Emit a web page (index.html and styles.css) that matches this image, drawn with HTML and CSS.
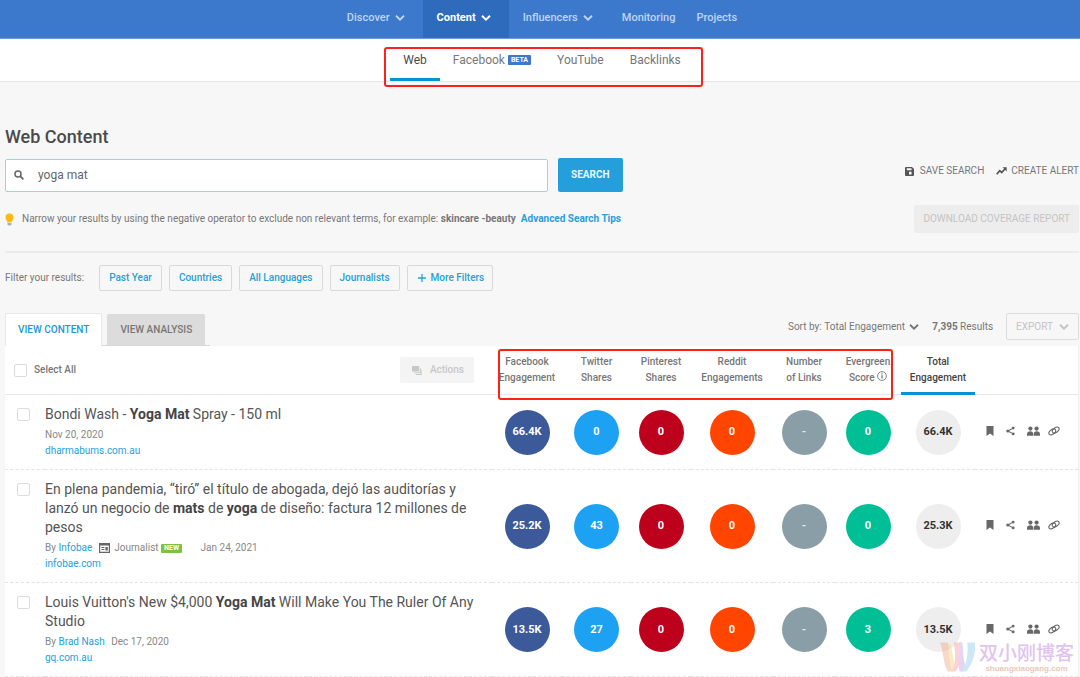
FILE: index.html
```html
<!DOCTYPE html>
<html lang="en">
<head>
<meta charset="utf-8">
<title>Web Content</title>
<link rel="stylesheet" href="styles.css">
</head>
<body>
<svg class="sprite" aria-hidden="true">
  <symbol id="chevron" viewBox="0 0 10 6"><path d="M1 .8 5 4.700 9 .8" fill="none" stroke="currentColor" stroke-width="1.900"/></symbol>
  <symbol id="bookmark" viewBox="0 0 8 10"><path d="M.5 0h7v10L4 7.4.5 10z" fill="currentColor"/></symbol>
  <symbol id="share" viewBox="0 0 10 10"><path d="M8 1.8 2 5l6 3.2" fill="none" stroke="currentColor" stroke-width="1.2"/><circle cx="8" cy="1.8" r="1.6" fill="currentColor"/><circle cx="2" cy="5" r="1.7" fill="currentColor"/><circle cx="8" cy="8.2" r="1.6" fill="currentColor"/></symbol>
  <symbol id="people" viewBox="0 0 14 10"><g fill="currentColor"><circle cx="3.7" cy="2.4" r="2.3"/><circle cx="10.3" cy="2.4" r="2.3"/><path d="M0 10V8.2C0 6.400 1.600 5.300 3.600 5.300s3.100 1.100 3.100 2.900V10zM7.300 10V8.200c0-1.800 1.100-2.900 3.100-2.900s3.600 1.100 3.600 2.900V10z"/></g></symbol>
  <symbol id="link" viewBox="0 0 12 10"><g fill="none" stroke="currentColor" stroke-width="1.1"><ellipse cx="4.300" cy="5.900" rx="3.800" ry="2.300" transform="rotate(-35 4.300 5.900)"/><ellipse cx="7.700" cy="4.100" rx="3.800" ry="2.300" transform="rotate(-35 7.700 4.100)"/></g></symbol>
</svg>

<header class="topbar">
  <nav class="topnav" aria-label="Main">
    <button class="topnav-item" type="button">Discover <svg class="chev"><use href="#chevron"/></svg></button>
    <button class="topnav-item is-active" type="button">Content <svg class="chev"><use href="#chevron"/></svg></button>
    <button class="topnav-item" type="button">Influencers <svg class="chev"><use href="#chevron"/></svg></button>
    <a class="topnav-item is-plain" href="#">Monitoring</a>
    <a class="topnav-item is-plain" href="#">Projects</a>
  </nav>
</header>

<div class="subbar">
  <nav class="subnav" aria-label="Content type">
    <a class="subnav-item is-active" href="#">Web</a>
    <a class="subnav-item" href="#">Facebook <span class="beta">BETA</span></a>
    <a class="subnav-item" href="#">YouTube</a>
    <a class="subnav-item" href="#">Backlinks</a>
    <span class="callout callout-nav"></span>
  </nav>
</div>

<main class="page">
  <h1 class="title">Web Content</h1>

  <div class="search-row">
    <form class="search">
      <label class="search-box">
        <svg class="icon-search" viewBox="0 0 10 10"><circle cx="4" cy="4" r="3" fill="none" stroke="currentColor" stroke-width="1.500"/><path d="m6.200 6.200 3.200 3.200" stroke="currentColor" stroke-width="1.800"/></svg>
        <input class="search-input" type="text" value="yoga mat" aria-label="Search">
      </label>
      <button class="btn-search" type="button">SEARCH</button>
    </form>
    <div class="search-links">
      <a class="text-action" href="#"><svg class="icon-save" viewBox="0 0 9 9"><path fill="currentColor" fill-rule="evenodd" d="M1 0h6l2 2v6a1 1 0 0 1-1 1H1a1 1 0 0 1-1-1V1a1 1 0 0 1 1-1zm.800 1.300v1.900h4.700V1.300zM4 4.800v2.600h2.600V4.800z"/></svg>SAVE SEARCH</a>
      <a class="text-action is-alert" href="#"><svg class="icon-trend" viewBox="0 0 11 8"><path d="m.700 7.200 3-3.600 2.100 1.900 3-3.500" fill="none" stroke="currentColor" stroke-width="1.700"/><path d="M6.600.3h4.100v4.100z" fill="currentColor"/></svg>CREATE ALERT</a>
    </div>
  </div>

  <div class="tip-row">
    <p class="tip"><svg class="icon-bulb" viewBox="0 0 9 13"><path d="M4.500.4a4 4 0 0 0-4 4c0 2 1.500 2.800 1.900 5h4.200c.4-2.200 1.900-3 1.900-5a4 4 0 0 0-4-4z" fill="#fdbb12"/><path d="M2.500 9.900h4v1.300l-1 1.200h-2l-1-1.200z" fill="#9fb3bf"/></svg>Narrow your results by using the negative operator to exclude non relevant terms, for example: <strong>skincare -beauty</strong> <a class="tip-link" href="#">Advanced Search Tips</a></p>
    <button class="btn-report" type="button" disabled>DOWNLOAD COVERAGE REPORT</button>
  </div>

  <div class="filters">
    <span class="filters-label">Filter your results:</span>
    <button class="filter" type="button">Past Year</button>
    <button class="filter" type="button">Countries</button>
    <button class="filter" type="button">All Languages</button>
    <button class="filter" type="button">Journalists</button>
    <button class="filter is-more" type="button"><svg class="icon-plus" viewBox="0 0 8 8"><path d="M4 0v8M0 4h8" stroke="currentColor" stroke-width="1.300"/></svg>More Filters</button>
  </div>

  <div class="tabs-row">
    <div class="tabs">
      <button class="tab is-active" type="button">VIEW CONTENT</button>
      <span class="tab-rest"><button class="tab" type="button">VIEW ANALYSIS</button></span>
    </div>
    <div class="tools">
      <label class="sort">Sort by: <select class="sort-select"><option>Total Engagement</option></select><svg class="chev"><use href="#chevron"/></svg></label>
      <span class="count"><strong>7,395</strong> Results</span>
      <button class="btn-export" type="button" disabled>EXPORT <svg class="chev"><use href="#chevron"/></svg></button>
    </div>
  </div>

  <div class="panel">
    <table class="results">
      <colgroup><col class="c-check"><col><col class="c-fb"><col class="c-tw"><col class="c-pin"><col class="c-red"><col class="c-num"><col class="c-ever"><col class="c-total"><col class="c-act"></colgroup>
      <thead>
        <tr>
          <th colspan="2" class="head-main"><div class="head-tools"><label class="select-all"><input class="check" type="checkbox">Select All</label><button class="btn-actions" type="button" disabled><svg class="icon-stack" viewBox="0 0 10 9"><path d="M0 0h7.300v5.600H0zM8 2.200h.9v5H2.300v-.9H8zM9.400 3.800h.6V9H4v-.9h5.400z" fill="currentColor"/></svg>Actions</button></div></th>
          <th>Facebook<br>Engagement</th>
          <th>Twitter<br>Shares</th>
          <th>Pinterest<br>Shares</th>
          <th>Reddit<br>Engagements</th>
          <th>Number<br>of Links</th>
          <th>Evergreen<br>Score <svg class="icon-info" viewBox="0 0 10 10"><circle cx="5" cy="5" r="4.400" fill="none" stroke="currentColor" stroke-width=".9"/><path d="M5 4.300v3.300M5 2.300v1.200" stroke="currentColor" stroke-width="1.300"/></svg></th>
          <th class="is-sorted">Total<br>Engagement</th>
          <th></th>
        </tr>
      </thead>
      <tbody>
        <tr>
          <td class="cell-check"><input class="check" type="checkbox" aria-label="Select Bondi Wash"></td>
          <td class="cell-main">
            <h2 class="headline">Bondi Wash - <strong>Yoga Mat</strong> Spray - 150 ml</h2>
            <p class="meta">Nov 20, 2020</p>
            <p class="meta"><a href="#">dharmabums.com.au</a></p>
          </td>
          <td><span class="dot fb">66.4K</span></td>
          <td><span class="dot tw">0</span></td>
          <td><span class="dot pin">0</span></td>
          <td><span class="dot red">0</span></td>
          <td><span class="dot num">-</span></td>
          <td><span class="dot ever">0</span></td>
          <td><span class="dot total">66.4K</span></td>
          <td><div class="acts"><button class="act is-wide" type="button" aria-label="Bookmark"><svg class="i-book"><use href="#bookmark"/></svg></button><button class="act is-wide" type="button" aria-label="Share"><svg class="i-share"><use href="#share"/></svg></button><button class="act" type="button" aria-label="Sharers"><svg class="i-people"><use href="#people"/></svg></button><button class="act" type="button" aria-label="Backlinks"><svg class="i-link"><use href="#link"/></svg></button></div></td>
        </tr>
        <tr>
          <td class="cell-check"><input class="check" type="checkbox" aria-label="Select En plena pandemia"></td>
          <td class="cell-main">
            <h2 class="headline">En plena pandemia, “tiró” el título de abogada, dejó las auditorías y lanzó un negocio de <strong>mats</strong> de <strong>yoga</strong> de diseño: factura 12 millones de pesos</h2>
            <p class="meta">By <a href="#">Infobae</a> <svg class="icon-card" viewBox="0 0 11 10"><path fill="currentColor" fill-rule="evenodd" d="M0 0h11v10H0zm1.200 2.600v6.200h8.600V2.600zM2.400 4h3v1h-3zm0 2h3v1h-3zM6.400 4h2.400v3.500H6.400z"/></svg> Journalist <span class="new">NEW</span> <span class="date-far">Jan 24, 2021</span></p>
            <p class="meta"><a href="#">infobae.com</a></p>
          </td>
          <td><span class="dot fb">25.2K</span></td>
          <td><span class="dot tw">43</span></td>
          <td><span class="dot pin">0</span></td>
          <td><span class="dot red">0</span></td>
          <td><span class="dot num">-</span></td>
          <td><span class="dot ever">0</span></td>
          <td><span class="dot total">25.3K</span></td>
          <td><div class="acts"><button class="act is-wide" type="button" aria-label="Bookmark"><svg class="i-book"><use href="#bookmark"/></svg></button><button class="act is-wide" type="button" aria-label="Share"><svg class="i-share"><use href="#share"/></svg></button><button class="act" type="button" aria-label="Sharers"><svg class="i-people"><use href="#people"/></svg></button><button class="act" type="button" aria-label="Backlinks"><svg class="i-link"><use href="#link"/></svg></button></div></td>
        </tr>
        <tr>
          <td class="cell-check"><input class="check" type="checkbox" aria-label="Select Louis Vuitton's New Yoga Mat"></td>
          <td class="cell-main">
            <h2 class="headline">Louis Vuitton's New $4,000 <strong>Yoga Mat</strong> Will Make You The Ruler Of Any Studio</h2>
            <p class="meta">By <a href="#">Brad Nash</a> <span class="date">Dec 17, 2020</span></p>
            <p class="meta"><a href="#">gq.com.au</a></p>
          </td>
          <td><span class="dot fb">13.5K</span></td>
          <td><span class="dot tw">27</span></td>
          <td><span class="dot pin">0</span></td>
          <td><span class="dot red">0</span></td>
          <td><span class="dot num">-</span></td>
          <td><span class="dot ever">3</span></td>
          <td><span class="dot total">13.5K</span></td>
          <td><div class="acts"><button class="act is-wide" type="button" aria-label="Bookmark"><svg class="i-book"><use href="#bookmark"/></svg></button><button class="act is-wide" type="button" aria-label="Share"><svg class="i-share"><use href="#share"/></svg></button><button class="act" type="button" aria-label="Sharers"><svg class="i-people"><use href="#people"/></svg></button><button class="act" type="button" aria-label="Backlinks"><svg class="i-link"><use href="#link"/></svg></button></div></td>
        </tr>
      </tbody>
    </table>
    <span class="callout callout-head"></span>
    <div class="watermark">
      <svg class="wm-logo" viewBox="0 0 36 30">
        <path d="M0 0h8c3 8 1 18 5 30H8C3 22 4 10 0 0z" fill="#f3a98f"/>
        <path d="M8 2h3c2 9 2 16 5 22l-3 6C9 20 10 10 8 2z" fill="#f6d774"/>
        <path d="M14 0h8c3 8 1 20-6 30h-4c5-10 4-20 2-30z" fill="#f2a0a8"/>
        <path d="M20 0h3c1 10 1 18 3 24l-2 6h-4c-2-10 2-20 0-30z" fill="#c9a4e0"/>
        <path d="M28 0h8c1 12-3 22-9 30h-5c6-8 7-20 6-30z" fill="#8fcbee"/>
      </svg>
      <div class="wm-text"><span class="wm-name">双小刚博客</span><span class="wm-url">shuangxiaogang.com</span></div>
    </div>
  </div>
</main>
</body>
</html>
```
FILE: styles.css
```css
* { box-sizing: border-box; }

body {
  margin: 0;
  background: #f7f7f7;
  color: #777;
  font: 10px/16px Roboto, "Noto Sans CJK SC", sans-serif;
}

button, input, select { font: inherit; color: inherit; margin: 0; }
button { cursor: pointer; border: 0; background: none; padding: 0; }
a { color: #27a0dc; text-decoration: none; }
h1, h2, p { margin: 0; font-weight: 400; }
strong { font-weight: 700; }
svg { display: inline-block; flex: none; }
.sprite { position: absolute; width: 0; height: 0; }
.chev { width: 10px; height: 6px; }

/* Top navigation */
.topbar { background: #3c79cc; border-bottom: 1px solid #6c9ce0; }
.topnav { display: flex; justify-content: center; height: 38px; }
.topnav-item {
  display: flex;
  align-items: center;
  gap: 5px;
  padding: 0 18px 3px 14px;
  color: #bfd4f2;
  font-size: 11px;
  font-weight: 500;
}
.topnav-item.is-active { background: #2f6bbd; color: #fff; font-weight: 700; }
.topnav-item.is-plain { padding: 0 10px 3px 11px; }

.subbar { display: flex; justify-content: center; background: #fff; border-bottom: 1px solid #e6e6e6; padding-left: 4px; }
.subnav { position: relative; display: flex; height: 42px; }
.subnav-item {
  display: flex;
  align-items: center;
  gap: 3px;
  padding: 2px 13px 0;
  border-bottom: 3px solid transparent;
  color: #777;
  font-size: 12px;
  font-weight: 400;
}
.subnav-item.is-active { color: #4a4a4a; border-color: #0693d6; }
.beta { background: #3c79cc; color: #fff; border-radius: 1px; font-size: 7px; line-height: 10px; font-weight: 700; padding: 0 3px; }

.callout { position: absolute; border: 2px solid #fd2117; border-radius: 3px; pointer-events: none; }
.callout-nav { inset: 8px -9px -6px -6px; }

/* Search */
.page { padding: 43px 1px 0 5px; }
.title { font-size: 18px; line-height: 24px; font-weight: 500; color: #4a4a4a; }
.search-row, .tip-row, .tabs-row { display: flex; justify-content: space-between; align-items: center; }
.search-row { margin-top: 9px; }
.search { display: flex; align-items: center; gap: 10px; width: 57.5%; }
.search-box {
  display: flex;
  align-items: center;
  gap: 14px;
  flex: 1;
  height: 33px;
  padding: 0 8px;
  background: #fff;
  border: 1px solid #9bd3ee;
  border-radius: 2px;
}
.icon-search { width: 10px; height: 10px; color: #666; }
.search-input { flex: 1; min-width: 0; border: 0; outline: 0; padding: 0; background: none; color: #666; font-size: 12px; }
.btn-search { height: 34px; padding: 0 13px; background: #259fdc; border-radius: 2px; color: #e8f6fd; font-weight: 700; }
.search-links { display: flex; gap: 12px; padding-bottom: 8px; }
.text-action { display: flex; align-items: center; gap: 6px; color: #777; }
.text-action.is-alert { gap: 4px; }
.icon-save { width: 9px; height: 9px; color: #555; }
.icon-trend { width: 11px; height: 8px; color: #555; }

.tip-row { margin-top: 13px; padding-bottom: 18px; border-bottom: 2px solid #ececec; }
.tip { display: flex; align-items: center; white-space: pre-wrap; }
.icon-bulb { width: 9px; height: 13px; margin-right: 8px; }
.tip-link { font-weight: 700; margin-left: 5px; }
.btn-report { height: 28px; padding: 0 9px; background: #ededed; border-radius: 2px; color: #c4c4c4; }

.filters { display: flex; align-items: center; gap: 7px; margin-top: 12px; }
.filters-label { margin-right: 8px; }
.filter { display: flex; align-items: center; gap: 5px; height: 26px; padding: 0 9px; border: 1px solid #d9d9d9; border-radius: 2px; color: #27a0dc; font-weight: 500; }
.filter.is-more { padding: 0 8px 0 10px; }
.icon-plus { width: 8px; height: 8px; }

/* Tabs */
.tabs-row { margin-top: 22px; }
.tabs { display: flex; align-items: stretch; }
.tab { height: 31px; padding: 0 13px; background: #dcdcdc; border-radius: 2px 2px 0 0; color: #777; font-weight: 500; }
.tab.is-active { height: 33px; padding: 0 12px; background: #fff; border: 1px solid #e8e8e8; border-bottom: 0; color: #1d97d7; }
.tab-rest { display: flex; align-items: flex-end; padding: 0 5px; border-bottom: 1px solid #d9d9d9; }
.tools { display: flex; align-items: center; padding-bottom: 6px; gap: 13px; }
.sort { display: flex; align-items: center; white-space: pre; }
.sort-select { appearance: none; border: 0; background: none; padding: 0; }
.sort .chev { margin-left: 4px; }
.btn-export { display: flex; align-items: center; gap: 6px; height: 27px; padding: 0 9px; border: 1px solid #ddd; border-radius: 2px; color: #c4c4c4; }

/* Results */
.panel { position: relative; background: #fff; border-right: 1px solid #f0f0f0; }
.results { width: 100%; table-layout: fixed; border-collapse: separate; border-spacing: 0; }
.c-check { width: 40px; }
.c-fb { width: 70px; }
.c-tw { width: 69px; }
.c-pin { width: 60px; }
.c-red { width: 82px; }
.c-num { width: 62px; }
.c-ever { width: 66px; }
.c-total { width: 74px; }
.c-act { width: 103px; }

th { height: 49px; padding: 0; border-bottom: 1px solid #e6e6e6; font-weight: 500; white-space: nowrap; }
th.is-sorted { border-bottom: 3px solid #0693d6; color: #444; padding-top: 2px; }
.head-tools { display: flex; align-items: center; justify-content: space-between; padding: 0 18px 0 9px; }
.select-all { display: flex; align-items: center; gap: 7px; }
.check { appearance: none; flex: none; display: block; width: 13px; height: 13px; border: 1px solid #dcdcdc; border-radius: 2px; background: #fff; }
.btn-actions { display: flex; align-items: center; gap: 8px; height: 26px; padding: 0 10px 0 12px; background: #f4f4f4; border-radius: 2px; color: #c8c8c8; font-weight: 500; }
.icon-stack { width: 10px; height: 9px; }
.icon-info { width: 10px; height: 10px; }

td { padding: 0; border-bottom: 1px dashed #e4e4e4; vertical-align: middle; }
.cell-check { vertical-align: top; padding: 13px 0 0 12px; }
.cell-main { vertical-align: top; padding: 10px 16px 10px 0; }
.headline { font-size: 14px; line-height: 19px; color: #555; margin-bottom: 3px; }
.headline strong { color: #444; }
.meta { color: #888; }
.icon-card { width: 11px; height: 10px; margin: 0 2px 0 4px; vertical-align: -2px; color: #666; }
.new { display: inline-block; background: #7cc142; color: #fff; border-radius: 1px; font-size: 7px; line-height: 9px; font-weight: 700; padding: 0 3px; vertical-align: 1px; }
.date { margin-left: 4px; }
.date-far { margin-left: 16px; }

.dot { display: flex; align-items: center; justify-content: center; width: 45px; height: 45px; margin: 0 auto; border-radius: 50%; color: #fff; font-size: 11px; font-weight: 700; }
.fb { background: #3c5a99; }
.tw { background: #1da1f2; }
.pin { background: #bd001c; }
.red { background: #ff4500; }
.num { background: #8a9ea8; color: #e3e8ea; }
.ever { background: #00bf96; }
.total { background: #eee; color: #333; }

.acts { display: flex; align-items: center; padding: 0 0 2px 11px; gap: 8px; color: #686868; }
.act { display: flex; }
.act.is-wide { padding-right: 4px; }
.i-book { width: 8px; height: 10px; }
.i-share { width: 9px; height: 10px; }
.i-people { width: 13px; height: 10px; }
.i-link { width: 12px; height: 10px; }

.callout-head { top: 3px; right: 185px; width: 395px; height: 51px; }

/* Blog watermark over the last row */
.watermark { position: absolute; right: 4px; bottom: 3px; display: flex; align-items: center; gap: 4px; pointer-events: none; }
.wm-logo { width: 35px; height: 30px; opacity: .45; }
.wm-text { display: flex; flex-direction: column; align-items: center; }
.wm-name { color: #e0c3ee; font: 500 19px/24px "Noto Sans CJK SC", sans-serif; }
.wm-url { color: #ecc8b8; font: 700 8px/10px "Liberation Sans", sans-serif; }
```
